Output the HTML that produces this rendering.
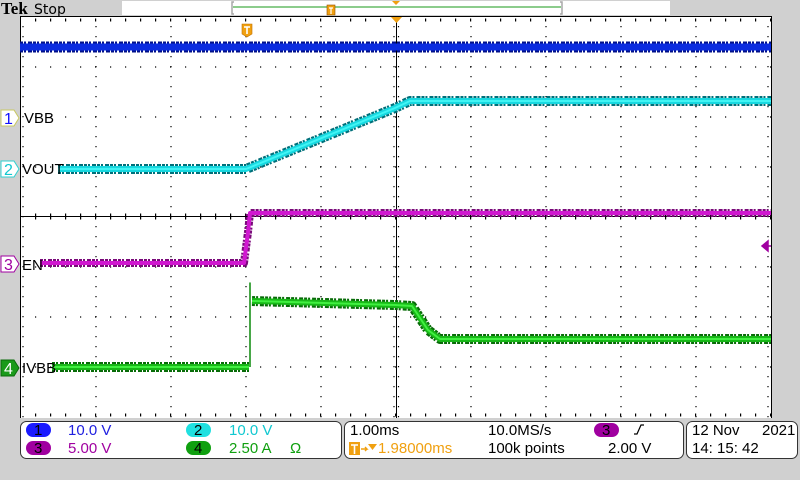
<!DOCTYPE html>
<html><head><meta charset="utf-8"><style>
html,body{margin:0;padding:0;width:800px;height:480px;overflow:hidden;background:#d0d0d0;font-family:"DejaVu Sans","Liberation Sans",sans-serif}
</style></head><body>
<svg width="800" height="480" viewBox="0 0 800 480" xmlns="http://www.w3.org/2000/svg" font-family="DejaVu Sans, Liberation Sans, sans-serif">
<rect width="800" height="480" fill="#d0d0d0"/>
<!-- top bar -->
<text x="1" y="14" font-family="Liberation Serif, serif" font-weight="bold" font-size="17" fill="#000">Tek</text>
<text x="34" y="14" font-size="14" fill="#000">Stop</text>
<rect x="122" y="1" width="548" height="14" fill="#fff"/>
<path d="M234 2 h-2 v12 h2 M560 2 h2 v12 h-2" stroke="#a8a8a8" stroke-width="1.5" fill="none"/>
<line x1="233" y1="7" x2="561" y2="7" stroke="#1a9a1a" stroke-width="1"/>
<rect x="327" y="5" width="8" height="10" fill="#f0a010" stroke="#905000" stroke-width="0.6"/>
<path d="M329 8 h4 M331 8 v6" stroke="#fff" stroke-width="1.2"/>
<path d="M392 1 h8 l-4 4z" fill="#f0a010"/>
<!-- plot -->
<rect x="20" y="16" width="751" height="402" fill="#fff"/>
<line x1="20" y1="16.5" x2="771" y2="16.5" stroke="#000" stroke-width="1"/>
<line x1="20.5" y1="16" x2="20.5" y2="418" stroke="#000"/>
<line x1="771.5" y1="16" x2="771.5" y2="418" stroke="#000"/>
<!-- grid dots -->
<g stroke="#000" stroke-width="1.2" stroke-dasharray="1.2 8.8">
<line x1="96" y1="26" x2="96" y2="418"/>
<line x1="171" y1="26" x2="171" y2="418"/>
<line x1="246" y1="26" x2="246" y2="418"/>
<line x1="321" y1="26" x2="321" y2="418"/>
<line x1="471" y1="26" x2="471" y2="418"/>
<line x1="546" y1="26" x2="546" y2="418"/>
<line x1="621" y1="26" x2="621" y2="418"/>
<line x1="696" y1="26" x2="696" y2="418"/>
<line x1="23" y1="26" x2="23" y2="418"/>
<line x1="768" y1="26" x2="768" y2="418"/>
<line x1="394" y1="26" x2="394" y2="418" stroke-dasharray="1.2 8.8"/>
<line x1="398.5" y1="26" x2="398.5" y2="418"/>
</g>
<g stroke="#000" stroke-width="1.2" stroke-dasharray="1.2 13.8">
<line x1="35" y1="67" x2="771" y2="67"/>
<line x1="35" y1="117" x2="771" y2="117"/>
<line x1="35" y1="167" x2="771" y2="167"/>
<line x1="35" y1="267" x2="771" y2="267"/>
<line x1="35" y1="317" x2="771" y2="317"/>
<line x1="35" y1="367" x2="771" y2="367"/>
<line x1="35" y1="20" x2="771" y2="20" stroke-width="3"/>
<line x1="35" y1="415" x2="771" y2="415" stroke-width="3"/>
<line x1="35" y1="216.5" x2="771" y2="216.5" stroke-width="6"/>
</g>
<line x1="20" y1="216.5" x2="771" y2="216.5" stroke="#000"/>
<line x1="396.5" y1="16" x2="396.5" y2="418" stroke="#000"/>
<path d="M391 17 h11 l-5.5 6z" fill="#f0a010"/>
<!-- trigger T -->
<path d="M242 24 h10 v10 l-5 3 l-5 -3z" fill="#f0a010" stroke="#c07000" stroke-width="0.6"/>
<path d="M244 27 h6 M247 27 v7" stroke="#fff" stroke-width="1.6"/>
<!-- waveforms -->
<g fill="none" stroke-linejoin="round">
<path d="M20 47 H771" stroke="#00108a" stroke-width="11" stroke-dasharray="3 1 2 2 4 1"/>
<path d="M20 47 H771" stroke="#0a2be0" stroke-width="7"/>
<path d="M58 169 H246 L395 108 L410 101 H771" stroke="#00707a" stroke-width="10" stroke-dasharray="3 1 2 2 4 1"/>
<path d="M58 169 H246 L395 108 L410 101 H771" stroke="#18d8e0" stroke-width="6"/>
<path d="M58 169 H246 L395 108 L410 101 H771" stroke="#40f4f4" stroke-width="2"/>
<path d="M40 263 H244 L248 232 L250 213 H771" stroke="#7a0a7a" stroke-width="8" stroke-dasharray="3 1 2 2 4 1"/>
<path d="M40 263 H244 L248 232 L250 213 H771" stroke="#d018d0" stroke-width="4"/>
<path d="M250 367 V283 V300" stroke="#0a8a0a" stroke-width="1.5"/>
<path d="M52 367 H249 M252 301 L395 305 L412 306 L428 330 L440 339 H771" stroke="#086c08" stroke-width="10" stroke-dasharray="3 1 2 2 4 1"/>
<path d="M52 367 H249 M252 301 L395 305 L412 306 L428 330 L440 339 H771" stroke="#18b818" stroke-width="6"/>
<path d="M52 367 H249 M252 301 L395 305 L412 306 L428 330 L440 339 H771" stroke="#40f040" stroke-width="2"/>
</g>
<path d="M762 246 l6 -5 v10z M766 246 h5" fill="#a000a0" stroke="#a000a0" stroke-width="1.5"/>
<!-- channel markers -->
<g font-size="15" font-family="Liberation Sans, sans-serif">
<path d="M1 110 h13 l5 8 l-5 8 h-13z" fill="#fff" stroke="#c8c860"/>
<text x="4" y="124" fill="#1010ff" font-size="16">1</text>
<text x="24" y="123" fill="#000">VBB</text>
<path d="M1 161 h13 l5 8 l-5 8 h-13z" fill="#fff" stroke="#30d0d0"/>
<text x="4" y="175" fill="#10c8d0" font-size="16">2</text>
<text x="22" y="174" fill="#000">VOUT</text>
<path d="M1 256 h13 l5 8 l-5 8 h-13z" fill="#fff" stroke="#a000a0"/>
<text x="4" y="270" fill="#a000a0" font-size="16">3</text>
<text x="22" y="270" fill="#000">EN</text>
<path d="M1 360 h13 l5 8 l-5 8 h-13z" fill="#1a9a1a" stroke="#0a6a0a"/>
<text x="4" y="374" fill="#fff" font-size="16">4</text>
<text x="22" y="373" fill="#000">IVBB</text>
</g>
<!-- bottom panels -->
<rect x="20.5" y="421.5" width="321" height="37" rx="6" fill="#fff" stroke="#333"/>
<rect x="344.5" y="421.5" width="339" height="37" rx="6" fill="#fff" stroke="#333"/>
<rect x="686.5" y="421.5" width="111" height="37" rx="6" fill="#fff" stroke="#333"/>
<g font-size="15" font-family="Liberation Sans, sans-serif">
<rect x="26" y="423" width="25" height="14" rx="7" fill="#1a1aff"/><text x="34" y="435" fill="#000">1</text>
<text x="68" y="435" fill="#2020e0">10.0 V</text>
<rect x="186" y="423" width="25" height="14" rx="7" fill="#20e0e0"/><text x="194" y="435" fill="#000">2</text>
<text x="229" y="435" fill="#10c8d0">10.0 V</text>
<rect x="26" y="441" width="25" height="14" rx="7" fill="#a000a0"/><text x="34" y="453" fill="#000">3</text>
<text x="68" y="453" fill="#a000a0">5.00 V</text>
<rect x="186" y="441" width="25" height="14" rx="7" fill="#10a010"/><text x="194" y="453" fill="#000">4</text>
<text x="229" y="453" fill="#10a010">2.50 A</text>
<text x="290" y="453" fill="#10a010">Ω</text>
<text x="350" y="435" fill="#000">1.00ms</text>
<text x="488" y="435" fill="#000">10.0MS/s</text>
<rect x="594" y="423" width="25" height="14" rx="7" fill="#a000a0"/><text x="602" y="435" fill="#000">3</text>
<path d="M634 434 h3 l4 -9 h3" stroke="#000" fill="none" stroke-width="1.2"/>
<rect x="349" y="442" width="11" height="13" fill="#f0a010"/>
<path d="M351 445 h7 M354.5 445 v9" stroke="#fff" stroke-width="1.6"/>
<path d="M361 449 h6 l-2 -2 M367 449 l-2 2" stroke="#f0a010" fill="none" stroke-width="1.4"/>
<path d="M368 444 h9 l-4.5 6z" fill="#f0a010"/>
<text x="378" y="453" fill="#f0a010">1.98000ms</text>
<text x="488" y="453" fill="#000">100k points</text>
<text x="608" y="453" fill="#000">2.00 V</text>
<text x="692" y="435" fill="#000">12 Nov</text>
<text x="762" y="435" fill="#000">2021</text>
<text x="692" y="453" fill="#000">14: 15: 42</text>
</g>
</svg>
</body></html>
